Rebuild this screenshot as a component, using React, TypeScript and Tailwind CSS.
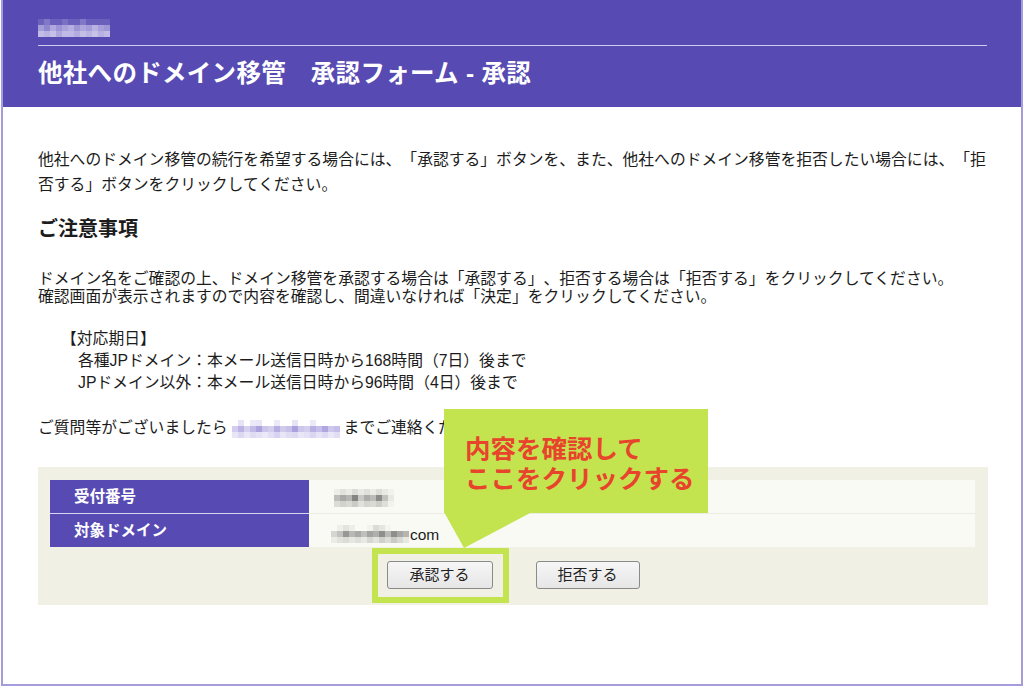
import React from "react";

const font = {
  fontFamily: '"Liberation Sans", "Noto Sans CJK JP", sans-serif',
};

// pixel mosaic used for blurred-out values
function Mosaic({ cells, size = 6 }: { cells: string[][]; size?: number }) {
  return (
    <span className="inline-flex flex-col align-middle">
      {cells.map((row, i) => (
        <span key={i} className="flex">
          {row.map((c, j) => (
            <span key={j} className="block shrink-0" style={{ width: size, height: size, background: c }} />
          ))}
        </span>
      ))}
    </span>
  );
}

const logoCells = [
  ["#6c62bc", "#8178c8", "#6a60bb", "#6a60bb", "#7a70c4", "#6a60bb", "#6a60bb", "#8178c8", "#6a60bb", "#6a60bb", "#6a60bb", "#6a60bb"],
  ["#a59ed9", "#8f87cf", "#b0a9de", "#9c94d4", "#a9a2db", "#b5aee0", "#9d95d5", "#aea7dd", "#a39cd8", "#b8b1e2", "#a69fd9", "#9e97d6"],
  ["#c2bce6", "#b9b3e2", "#c6c0e8", "#aea7dd", "#c0bae6", "#bfb9e5", "#b3ace0", "#c4bee7", "#bab4e3", "#c8c2e9", "#b7b1e2", "#c0bae6"],
];

const mailCells = [
  ["#ffffff", "#e6e3f5", "#ffffff", "#ece9f8", "#e9e6f6", "#ffffff", "#ffffff", "#ece9f8", "#ffffff", "#ffffff", "#e6e3f5", "#ffffff", "#ffffff", "#ece9f8", "#ffffff", "#ffffff", "#ffffff", "#ffffff"],
  ["#d2ccee", "#bcb4e5", "#d6d1ef", "#c2bbe7", "#aca3de", "#cbc5eb", "#d3cdee", "#b7afe2", "#d0caed", "#c7c1ea", "#aba2dd", "#ccc6ec", "#d3cdee", "#b9b1e3", "#c6bfea", "#afa7df", "#cdc7eb", "#c4bee8"],
  ["#e8e5f6", "#dcd8f2", "#e9e6f7", "#dfdbf3", "#e4e0f5", "#ebe8f7", "#e2def4", "#d8d3f0", "#e8e5f6", "#e0dcf3", "#ddd9f2", "#e9e6f7", "#e4e0f5", "#dad6f1", "#e6e3f6", "#dedaf3", "#eae7f7", "#e1ddf4"],
];

const numCells = [
  ["#eeeee8", "#e2e2dd", "#ebebe5", "#dcdcd7", "#e9e9e4", "#e0e0db", "#ecece7", "#deded9", "#eaeae5", "#f2f2ec"],
  ["#bdbdba", "#a9a9a7", "#b6b6b3", "#858583", "#c8c8c5", "#acacaa", "#bbbbb8", "#8c8c8a", "#c2c2bf", "#e9e9e4"],
  ["#dcdcd7", "#d1d1cd", "#d9d9d4", "#cacac6", "#e1e1dc", "#d4d4d0", "#dadad5", "#cdcdc9", "#dfdfda", "#f3f3ee"],
];

const domainCells = [
  ["#fafaf5", "#f0f0eb", "#e4e4df", "#eeeee9", "#fafaf5", "#fafaf5", "#f3f3ee", "#dcdcd7", "#e6e6e1", "#f5f5f0", "#fafaf5", "#fafaf5", "#fafaf5"],
  ["#d5d5d1", "#c2c2bf", "#979795", "#b8b8b5", "#a9a9a7", "#bfbfbc", "#a3a3a1", "#afafad", "#8f8f8d", "#b9b9b6", "#8e8e8c", "#a7a7a5", "#b5b5b2"],
  ["#ececE7", "#e2e2dd", "#dcdcd7", "#e7e7e2", "#dfdfda", "#e9e9e4", "#d6d6d2", "#e3e3de", "#cfcfcb", "#ddddd8", "#c9c9c5", "#d9d9d4", "#e8e8e3"],
];

export default function App() {
  return (
    <div
      className="relative w-[1022px] h-[686px] ml-[1px] border-x-2 border-b-2 border-[#a49cdb] bg-white text-[#1c1c1c] overflow-hidden [text-spacing-trim:space-all]"
      style={font}
    >
      {/* header */}
      <div className="h-[107px] bg-[#574bb3] px-[35px] pt-[15px]">
        <Mosaic cells={logoCells} size={6} />
        <div className="mt-[6px] h-px bg-[#cfcaee] mr-[-1px]" />
        <h1 className="mt-[14px] text-[24.5px] leading-[28px] font-bold text-white tracking-[0.3px]">
          他社へのドメイン移管　承認フォーム - 承認
        </h1>
      </div>

      {/* body */}
      <div className="pl-[35px] pr-[32px] pt-[40px] text-[15.8px]">
        <p className="w-[952px] leading-[25px]">
          他社へのドメイン移管の続行を希望する場合には、「承認する」ボタンを、また、他社へのドメイン移管を拒否したい場合には、「拒否する」ボタンをクリックしてください。
        </p>

        <h2 className="mt-[18px] text-[20px] leading-[28px] font-bold">ご注意事項</h2>

        <p className="mt-[27px] leading-[18px]">
          ドメイン名をご確認の上、ドメイン移管を承認する場合は「承認する」、拒否する場合は「拒否する」をクリックしてください。
          <br />
          確認画面が表示されますので内容を確認し、間違いなければ「決定」をクリックしてください。
        </p>

        <div className="mt-[22px] leading-[22px]">
          <div className="pl-[23px]">【対応期日】</div>
          <div className="pl-[40px]">各種JPドメイン：本メール送信日時から168時間（7日）後まで</div>
          <div className="pl-[40px]">JPドメイン以外：本メール送信日時から96時間（4日）後まで</div>
        </div>

        <p className="mt-[23px] leading-[22px] flex items-center">
          <span>ご質問等がございましたら</span>
          <span className="mx-[4px]">
            <Mosaic cells={mailCells} size={6} />
          </span>
          <span>までご連絡ください。</span>
        </p>

        {/* form box */}
        <div className="mt-[28px] w-[950px] bg-[#f0f0e4] pt-[13px] pb-[16px] px-[12px]">
          <table className="w-[925px] border-collapse text-[15.5px]">
            <tbody>
              <tr className="h-[33px]">
                <th className="w-[259px] bg-[#574bb3] text-white font-bold text-left pl-[24px] border-b border-[#d9d5f0]">
                  受付番号
                </th>
                <td className="bg-[#fafaf5] pl-[25px] border-b border-[#ecece4]">
                  <Mosaic cells={numCells} size={6} />
                </td>
              </tr>
              <tr className="h-[34px]">
                <th className="w-[259px] bg-[#574bb3] text-white font-bold text-left pl-[24px]">
                  対象ドメイン
                </th>
                <td className="bg-[#fafaf5] pl-[22px]">
                  <span className="inline-flex items-center">
                    <Mosaic cells={domainCells} size={6} />
                    <span className="ml-[1px]">com</span>
                  </span>
                </td>
              </tr>
            </tbody>
          </table>

          <div className="mt-[14px] flex justify-center gap-[43px]">
            <button className="w-[106px] h-[28px] rounded-[3px] border border-[#8a8a8a] bg-gradient-to-b from-[#f6f6f6] to-[#e6e6e6] text-[15px] text-[#222]">
              承認する
            </button>
            <button className="w-[104px] h-[28px] rounded-[3px] border border-[#8a8a8a] bg-gradient-to-b from-[#f6f6f6] to-[#e6e6e6] text-[15px] text-[#222]">
              拒否する
            </button>
          </div>
        </div>
      </div>

      {/* annotation: highlight around the approve button */}
      <div className="absolute left-[369px] top-[548px] w-[137px] h-[55px] border-[6px] border-[#c3e34f]" />

      {/* annotation: callout */}
      <div className="absolute left-[441px] top-[409px] w-[264px] h-[104px] bg-[#c3e34f] pl-[21px] pt-[25px] text-[25.5px] leading-[30px] font-semibold text-[#e8432c]">
        内容を確認して
        <br />
        ここをクリックする
      </div>
      <svg className="absolute left-[441px] top-[512px]" width="90" height="37" viewBox="0 0 90 37">
        <polygon points="0,0 88,0 20,36" fill="#c3e34f" />
      </svg>
    </div>
  );
}
